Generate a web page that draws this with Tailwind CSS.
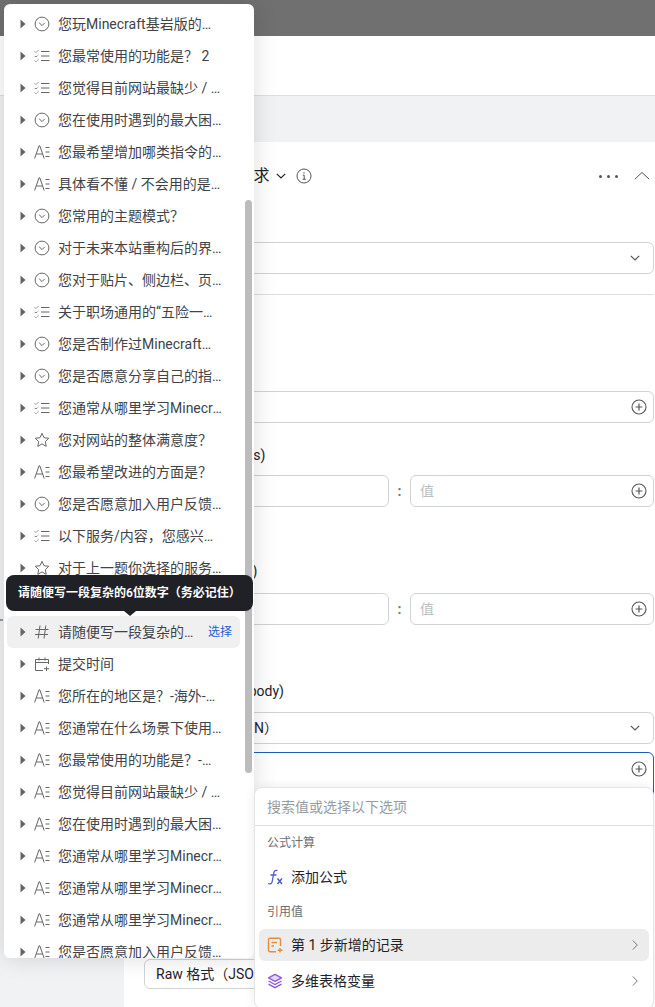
<!DOCTYPE html>
<html lang="zh-CN">
<head>
  <meta charset="UTF-8">
  <meta name="viewport" content="width=device-width, initial-scale=1.0">
  <title>发送 HTTP 请求</title>
  <script src="https://cdn.jsdelivr.net/npm/@tailwindcss/browser@4"></script>
</head>
<body class="relative w-[655px] h-[1007px] overflow-hidden bg-white text-[14px] text-[#33363b] font-['Roboto','Noto_Sans_CJK_SC',sans-serif]">
  <!-- icons used by the field list -->
  <svg class="hidden">
    <symbol id="i-select" viewBox="0 0 16 16"><circle cx="8" cy="8" r="6.9" fill="none" stroke="currentColor"/><path d="M5.2 6.8 8 9.6l2.8-2.8" fill="none" stroke="currentColor"/></symbol>
    <symbol id="i-multi" viewBox="0 0 16 16"><path d="M7 3.500h8.500M7 8h8.500M7 12.500h8.500" fill="none" stroke="currentColor"/><path d="M.8 3.400l1.200 1.200 2.400-2.400M.8 8l1.200 1.200L4.400 6.800M.8 12.600l1.200 1.200 2.400-2.400" fill="none" stroke="currentColor" stroke-dasharray="1.400 .7"/></symbol>
    <symbol id="i-text" viewBox="0 0 16 16"><path d="M.6 14.500 5 1.800h.8l4.400 12.700M2.200 10h6.400" fill="none" stroke="currentColor"/><path d="M11.500 3.500h4M11.500 8h4M11.500 12.500h4" fill="none" stroke="currentColor"/></symbol>
    <symbol id="i-star" viewBox="0 0 16 16"><path d="M8 1.300l2 4.400 4.800.6-3.500 3.300.9 4.800L8 11.900l-4.200 2.500.9-4.800L1.200 6.300l4.800-.6z" fill="none" stroke="currentColor" stroke-linejoin="round"/></symbol>
    <symbol id="i-hash" viewBox="0 0 16 16"><path d="M6 1.500 4.200 14.500M11.800 1.500 10 14.500M1.500 5.500h13M1 10.500h13" fill="none" stroke="currentColor"/></symbol>
    <symbol id="i-date" viewBox="0 0 16 16"><path d="M14.500 8V3.500h-13v11H9M1.500 6.500h13M5 1.500v3M11 1.500v3M12.500 10.500v4.500M10 12.700h5" fill="none" stroke="currentColor"/></symbol>
    <symbol id="i-plus" viewBox="0 0 16 16"><circle cx="8" cy="8" r="7" fill="none" stroke="currentColor" stroke-width="1.100"/><path d="M8 4.600v6.800M4.600 8h6.800" fill="none" stroke="currentColor" stroke-width="1.200"/></symbol>
    <symbol id="i-down" viewBox="0 0 12 12"><path d="M1.800 3.800 6 8l4.200-4.200" fill="none" stroke="currentColor" stroke-width="1.200"/></symbol>
    <symbol id="i-next" viewBox="0 0 12 12"><path d="M3.800 1.500 8.300 6l-4.500 4.500" fill="none" stroke="currentColor"/></symbol>
    <symbol id="i-caret" viewBox="0 0 8 10"><path d="M1.500.5 6.500 5l-5 4.500z" fill="currentColor"/></symbol>
  </svg>

  <!-- page behind the menus -->
  <div class="h-9 bg-[#707070]"></div>
  <div class="h-[60px] bg-white border-b border-[#dcdee0]"></div>
  <div class="h-[46px] bg-[#f1f2f4]"></div>

  <div class="flex h-[865px]">
    <div class="relative w-[124px] shrink-0 bg-[#f1f2f4]">
      <i class="absolute left-0 top-[477px] w-[3px] h-[2px] bg-[#999]"></i>
    </div>
    <div class="flex-1 pl-5 pr-[1px]">
      <div class="flex items-center h-[68px] -ml-5 pr-[4px]">
        <span class="ml-[33px] text-[16px] text-[#1f2329]">发送 HTTP 请求</span>
        <svg class="ml-[6px] w-3 h-3 text-[#1f2329]"><use href="#i-down"/></svg>
        <svg class="ml-[9px] w-4 h-4 text-[#555]" viewBox="0 0 16 16"><circle cx="8" cy="8" r="7" fill="none" stroke="currentColor"/><path d="M6.800 7.200h1.400v4M6.600 11.300h3.200M8 4.200v1.400" fill="none" stroke="currentColor"/></svg>
        <span class="ml-auto mr-4 flex gap-[5px]">
          <i class="block w-[3px] h-[3px] rounded-full bg-[#555]"></i><i class="block w-[3px] h-[3px] rounded-full bg-[#555]"></i><i class="block w-[3px] h-[3px] rounded-full bg-[#555]"></i>
        </span>
        <svg class="w-4 h-4 text-[#555]" viewBox="0 0 16 16"><path d="M.8 11.200 8 4.500l7.200 6.700" fill="none" stroke="currentColor"/></svg>
      </div>

      <div class="h-8 leading-6">请求方式</div>
      <div class="flex items-center justify-between h-8 pl-[11px] pr-3 border border-[#d0d3d6] rounded-md">
        <span>POST</span>
        <svg class="w-3 h-3 text-[#555]"><use href="#i-down"/></svg>
      </div>
      <div class="mt-5 border-t border-[#dcdee0]"></div>

      <div class="mt-[75px] h-[21px] leading-5">请求地址</div>
      <div class="flex items-center justify-end h-8 pr-[6px] border border-[#d0d3d6] rounded-md">
        <svg class="w-4 h-4 text-[#555]"><use href="#i-plus"/></svg>
      </div>

      <div class="mt-5 h-[32px] leading-6 text-[#1f2329]">请求标头 (Headers)</div>
      <div class="flex items-center">
        <div class="shrink-0 w-[245px] h-8 border border-[#d0d3d6] rounded-md"></div>
        <span class="shrink-0 w-[21px] text-center font-bold text-[#777]">:</span>
        <div class="flex-1 flex items-center justify-between h-8 pl-[9px] pr-[6px] border border-[#d0d3d6] rounded-md text-[#bbbec2]">
          <span>值</span>
          <svg class="w-4 h-4 text-[#555]"><use href="#i-plus"/></svg>
        </div>
      </div>

      <div class="mt-[54px] h-[32px] pl-2 leading-5 text-[#1f2329]">查询参数 (Query)</div>
      <div class="flex items-center">
        <div class="shrink-0 w-[245px] h-8 border border-[#d0d3d6] rounded-md"></div>
        <span class="shrink-0 w-[21px] text-center font-bold text-[#777]">:</span>
        <div class="flex-1 flex items-center justify-between h-8 pl-[9px] pr-[6px] border border-[#d0d3d6] rounded-md text-[#bbbec2]">
          <span>值</span>
          <svg class="w-4 h-4 text-[#555]"><use href="#i-plus"/></svg>
        </div>
      </div>

      <div class="mt-[56px] h-[31px] leading-5 text-[#1f2329]">请求体 (Request body)</div>
      <div class="flex items-center justify-between h-8 pl-[11px] pr-3 border border-[#d0d3d6] rounded-md text-[#1f2329]">
        <span>Raw 格式（JSON）</span>
        <svg class="w-3 h-3 text-[#555]"><use href="#i-down"/></svg>
      </div>
      <div class="mt-2 flex justify-end h-[200px] pt-2 pr-[6px] border border-[#1a5fb4] rounded-md">
        <svg class="w-4 h-4 text-[#555]"><use href="#i-plus"/></svg>
      </div>
      <div class="mt-[7px] flex items-center h-[30px] pl-[11px] border border-[#d0d3d6] rounded-md text-[#1f2329]">Raw 格式（JSON）</div>
    </div>
  </div>

  <!-- field picker -->
  <div class="absolute left-1 top-1 w-[250px] h-[954px] overflow-hidden rounded-md bg-white shadow-[0_0_24px_rgba(0,0,0,0.14)]">
    <ul class="pt-1 pl-[3px] pr-[14px] text-[#404348]">
      <li class="flex items-center h-8 pl-3 pr-4"><svg class="shrink-0 w-2 h-[10px] mr-[7px] text-[#666]"><use href="#i-caret"/></svg><svg class="shrink-0 w-4 h-4 mr-2 text-[#666]"><use href="#i-select"/></svg><span class="truncate">您玩Minecraft基岩版的账号类型？</span></li>
      <li class="flex items-center h-8 pl-3 pr-4"><svg class="shrink-0 w-2 h-[10px] mr-[7px] text-[#666]"><use href="#i-caret"/></svg><svg class="shrink-0 w-4 h-4 mr-2 text-[#666]"><use href="#i-multi"/></svg><span class="truncate">您最常使用的功能是？ 2</span></li>
      <li class="flex items-center h-8 pl-3 pr-4"><svg class="shrink-0 w-2 h-[10px] mr-[7px] text-[#666]"><use href="#i-caret"/></svg><svg class="shrink-0 w-4 h-4 mr-2 text-[#666]"><use href="#i-multi"/></svg><span class="truncate">您觉得目前网站最缺少 / 最需要的内容是？</span></li>
      <li class="flex items-center h-8 pl-3 pr-4"><svg class="shrink-0 w-2 h-[10px] mr-[7px] text-[#666]"><use href="#i-caret"/></svg><svg class="shrink-0 w-4 h-4 mr-2 text-[#666]"><use href="#i-select"/></svg><span class="truncate">您在使用时遇到的最大困难是什么？</span></li>
      <li class="flex items-center h-8 pl-3 pr-4"><svg class="shrink-0 w-2 h-[10px] mr-[7px] text-[#666]"><use href="#i-caret"/></svg><svg class="shrink-0 w-4 h-4 mr-2 text-[#666]"><use href="#i-text"/></svg><span class="truncate">您最希望增加哪类指令的教程和说明？</span></li>
      <li class="flex items-center h-8 pl-3 pr-4"><svg class="shrink-0 w-2 h-[10px] mr-[7px] text-[#666]"><use href="#i-caret"/></svg><svg class="shrink-0 w-4 h-4 mr-2 text-[#666]"><use href="#i-text"/></svg><span class="truncate">具体看不懂 / 不会用的是哪些内容呢？</span></li>
      <li class="flex items-center h-8 pl-3 pr-4"><svg class="shrink-0 w-2 h-[10px] mr-[7px] text-[#666]"><use href="#i-caret"/></svg><svg class="shrink-0 w-4 h-4 mr-2 text-[#666]"><use href="#i-select"/></svg><span class="truncate">您常用的主题模式？</span></li>
      <li class="flex items-center h-8 pl-3 pr-4"><svg class="shrink-0 w-2 h-[10px] mr-[7px] text-[#666]"><use href="#i-caret"/></svg><svg class="shrink-0 w-4 h-4 mr-2 text-[#666]"><use href="#i-select"/></svg><span class="truncate">对于未来本站重构后的界面风格您有什么偏好？</span></li>
      <li class="flex items-center h-8 pl-3 pr-4"><svg class="shrink-0 w-2 h-[10px] mr-[7px] text-[#666]"><use href="#i-caret"/></svg><svg class="shrink-0 w-4 h-4 mr-2 text-[#666]"><use href="#i-select"/></svg><span class="truncate">您对于贴片、侧边栏、页面布局的看法是？</span></li>
      <li class="flex items-center h-8 pl-3 pr-4"><svg class="shrink-0 w-2 h-[10px] mr-[7px] text-[#666]"><use href="#i-caret"/></svg><svg class="shrink-0 w-4 h-4 mr-2 text-[#666]"><use href="#i-multi"/></svg><span class="truncate">关于职场通用的“五险一金”您了解多少？</span></li>
      <li class="flex items-center h-8 pl-3 pr-4"><svg class="shrink-0 w-2 h-[10px] mr-[7px] text-[#666]"><use href="#i-caret"/></svg><svg class="shrink-0 w-4 h-4 mr-2 text-[#666]"><use href="#i-select"/></svg><span class="truncate">您是否制作过Minecraft的附加包？</span></li>
      <li class="flex items-center h-8 pl-3 pr-4"><svg class="shrink-0 w-2 h-[10px] mr-[7px] text-[#666]"><use href="#i-caret"/></svg><svg class="shrink-0 w-4 h-4 mr-2 text-[#666]"><use href="#i-select"/></svg><span class="truncate">您是否愿意分享自己的指令作品？</span></li>
      <li class="flex items-center h-8 pl-3 pr-4"><svg class="shrink-0 w-2 h-[10px] mr-[7px] text-[#666]"><use href="#i-caret"/></svg><svg class="shrink-0 w-4 h-4 mr-2 text-[#666]"><use href="#i-multi"/></svg><span class="truncate">您通常从哪里学习Minecraft指令？</span></li>
      <li class="flex items-center h-8 pl-3 pr-4"><svg class="shrink-0 w-2 h-[10px] mr-[7px] text-[#666]"><use href="#i-caret"/></svg><svg class="shrink-0 w-4 h-4 mr-2 text-[#666]"><use href="#i-star"/></svg><span class="truncate">您对网站的整体满意度？</span></li>
      <li class="flex items-center h-8 pl-3 pr-4"><svg class="shrink-0 w-2 h-[10px] mr-[7px] text-[#666]"><use href="#i-caret"/></svg><svg class="shrink-0 w-4 h-4 mr-2 text-[#666]"><use href="#i-text"/></svg><span class="truncate">您最希望改进的方面是？</span></li>
      <li class="flex items-center h-8 pl-3 pr-4"><svg class="shrink-0 w-2 h-[10px] mr-[7px] text-[#666]"><use href="#i-caret"/></svg><svg class="shrink-0 w-4 h-4 mr-2 text-[#666]"><use href="#i-select"/></svg><span class="truncate">您是否愿意加入用户反馈群聊呢？</span></li>
      <li class="flex items-center h-8 pl-3 pr-4"><svg class="shrink-0 w-2 h-[10px] mr-[7px] text-[#666]"><use href="#i-caret"/></svg><svg class="shrink-0 w-4 h-4 mr-2 text-[#666]"><use href="#i-multi"/></svg><span class="truncate">以下服务/内容，您感兴趣的有哪些？</span></li>
      <li class="flex items-center h-8 pl-3 pr-4"><svg class="shrink-0 w-2 h-[10px] mr-[7px] text-[#666]"><use href="#i-caret"/></svg><svg class="shrink-0 w-4 h-4 mr-2 text-[#666]"><use href="#i-star"/></svg><span class="truncate">对于上一题你选择的服务的期待程度？</span></li>
      <li class="flex items-center h-8 pl-3 pr-4"><svg class="shrink-0 w-2 h-[10px] mr-[7px] text-[#666]"><use href="#i-caret"/></svg><svg class="shrink-0 w-4 h-4 mr-2 text-[#666]"><use href="#i-text"/></svg><span class="truncate">您还有什么想说的吗？</span></li>
      <li class="flex items-center h-8 pl-3 pr-2 rounded-md bg-[#f0f0f0]"><svg class="shrink-0 w-2 h-[10px] mr-[7px] text-[#666]"><use href="#i-caret"/></svg><svg class="shrink-0 w-4 h-4 mr-2 text-[#666]"><use href="#i-hash"/></svg><span class="truncate">请随便写一段复杂的6位数字（务必记住）</span><span class="shrink-0 ml-2 text-[12px] text-[#1f5fd0]">选择</span></li>
      <li class="flex items-center h-8 pl-3 pr-4"><svg class="shrink-0 w-2 h-[10px] mr-[7px] text-[#666]"><use href="#i-caret"/></svg><svg class="shrink-0 w-4 h-4 mr-2 text-[#666]"><use href="#i-date"/></svg><span class="truncate">提交时间</span></li>
      <li class="flex items-center h-8 pl-3 pr-4"><svg class="shrink-0 w-2 h-[10px] mr-[7px] text-[#666]"><use href="#i-caret"/></svg><svg class="shrink-0 w-4 h-4 mr-2 text-[#666]"><use href="#i-text"/></svg><span class="truncate">您所在的地区是？-海外-请填写国家</span></li>
      <li class="flex items-center h-8 pl-3 pr-4"><svg class="shrink-0 w-2 h-[10px] mr-[7px] text-[#666]"><use href="#i-caret"/></svg><svg class="shrink-0 w-4 h-4 mr-2 text-[#666]"><use href="#i-text"/></svg><span class="truncate">您通常在什么场景下使用本站？-其他</span></li>
      <li class="flex items-center h-8 pl-3 pr-4"><svg class="shrink-0 w-2 h-[10px] mr-[7px] text-[#666]"><use href="#i-caret"/></svg><svg class="shrink-0 w-4 h-4 mr-2 text-[#666]"><use href="#i-text"/></svg><span class="truncate">您最常使用的功能是？-其他内容</span></li>
      <li class="flex items-center h-8 pl-3 pr-4"><svg class="shrink-0 w-2 h-[10px] mr-[7px] text-[#666]"><use href="#i-caret"/></svg><svg class="shrink-0 w-4 h-4 mr-2 text-[#666]"><use href="#i-text"/></svg><span class="truncate">您觉得目前网站最缺少 / 最需要的内容是？</span></li>
      <li class="flex items-center h-8 pl-3 pr-4"><svg class="shrink-0 w-2 h-[10px] mr-[7px] text-[#666]"><use href="#i-caret"/></svg><svg class="shrink-0 w-4 h-4 mr-2 text-[#666]"><use href="#i-text"/></svg><span class="truncate">您在使用时遇到的最大困难是什么？</span></li>
      <li class="flex items-center h-8 pl-3 pr-4"><svg class="shrink-0 w-2 h-[10px] mr-[7px] text-[#666]"><use href="#i-caret"/></svg><svg class="shrink-0 w-4 h-4 mr-2 text-[#666]"><use href="#i-text"/></svg><span class="truncate">您通常从哪里学习Minecraft指令？</span></li>
      <li class="flex items-center h-8 pl-3 pr-4"><svg class="shrink-0 w-2 h-[10px] mr-[7px] text-[#666]"><use href="#i-caret"/></svg><svg class="shrink-0 w-4 h-4 mr-2 text-[#666]"><use href="#i-text"/></svg><span class="truncate">您通常从哪里学习Minecraft指令？</span></li>
      <li class="flex items-center h-8 pl-3 pr-4"><svg class="shrink-0 w-2 h-[10px] mr-[7px] text-[#666]"><use href="#i-caret"/></svg><svg class="shrink-0 w-4 h-4 mr-2 text-[#666]"><use href="#i-text"/></svg><span class="truncate">您通常从哪里学习Minecraft指令？</span></li>
      <li class="flex items-center h-8 pl-3 pr-4"><svg class="shrink-0 w-2 h-[10px] mr-[7px] text-[#666]"><use href="#i-caret"/></svg><svg class="shrink-0 w-4 h-4 mr-2 text-[#666]"><use href="#i-text"/></svg><span class="truncate">您是否愿意加入用户反馈群聊呢？</span></li>
    </ul>
    <div class="absolute right-[2px] top-[196px] w-[7px] h-[573px] rounded-full bg-[#bcbcbc]"></div>
  </div>

  <!-- tooltip on the hovered field -->
  <div class="absolute left-[6px] top-[575px] w-[247px] h-9 flex items-center pl-3 rounded-lg bg-[#1f2127] text-[12px] font-semibold text-white">
    请随便写一段复杂的6位数字（务必记住）
    <i class="absolute left-[118px] top-9 w-0 h-0 border-x-[6px] border-x-transparent border-t-[5px] border-t-[#1f2127]"></i>
  </div>

  <!-- value picker -->
  <div class="absolute left-[254px] top-[787px] w-[400px] h-[222px] rounded-lg border border-[#e4e5e7] bg-white shadow-[0_0_12px_rgba(0,0,0,0.08)]">
    <div class="h-[38px] pl-3 leading-[38px] text-[#999c9f] border-b border-[#dcdee0]">搜索值或选择以下选项</div>
    <div class="pl-3 mt-[8px] h-[18px] leading-[18px] text-[12px] text-[#6b6e73]">公式计算</div>
    <div class="flex items-center h-8 mt-[9px] pl-3 text-[#1f2329]">
      <svg class="w-4 h-4 mr-2" viewBox="0 0 16 16"><path d="M10.500 1.500C8.300.8 7.200 1.800 6.800 4L5.200 12.500C4.800 14.800 3.500 15.300 1 14.500M3.500 6h6" fill="none" stroke="#4a5bd0" stroke-width="1.300"/><path d="M10.500 9.500l4.500 5.500M15 9.500 10.500 15" fill="none" stroke="#4a5bd0" stroke-width="1.500"/></svg>
      添加公式
    </div>
    <div class="pl-3 mt-[10px] h-[18px] leading-[18px] text-[12px] text-[#6b6e73]">引用值</div>
    <div class="flex items-center h-8 mx-1 mt-[8px] pl-2 pr-2 rounded-md bg-[#ececec] text-[#1f2329]">
      <svg class="w-4 h-4 mr-2" viewBox="0 0 16 16"><path d="M9 14.800H3A1.500 1.500 0 0 1 1.500 13.300V2.700A1.500 1.500 0 0 1 3 1.200h9A1.500 1.500 0 0 1 13.500 2.700V9M4.500 5.500h5.500M4.500 9H7M13 11v4.500M10.700 13.300h4.800" fill="none" stroke="#e88a3c" stroke-width="1.400"/></svg>
      第 1 步新增的记录
      <svg class="ml-auto w-3 h-3 text-[#777]"><use href="#i-next"/></svg>
    </div>
    <div class="flex items-center h-8 mx-1 mt-1 pl-2 pr-2 text-[#1f2329]">
      <svg class="w-4 h-4 mr-2" viewBox="0 0 16 16"><path d="M8 1.300 14.500 4.800 8 8.300 1.500 4.800z" fill="#e4d8fa" stroke="#8e5be0" stroke-width="1.400" stroke-linejoin="round"/><path d="M1.500 8 8 11.500 14.500 8M1.500 11.200 8 14.700 14.500 11.200" fill="none" stroke="#8e5be0" stroke-width="1.400"/></svg>
      多维表格变量
      <svg class="ml-auto w-3 h-3 text-[#777]"><use href="#i-next"/></svg>
    </div>
  </div>
</body>
</html>
